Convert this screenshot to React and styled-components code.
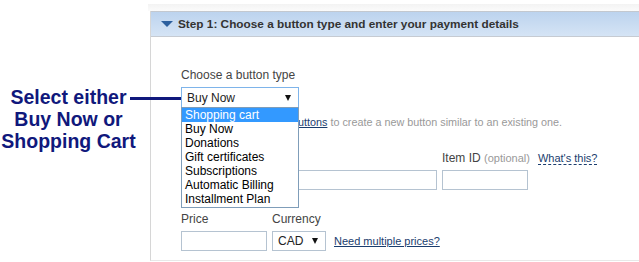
import React from 'react'
import styled, { createGlobalStyle } from 'styled-components'

const GlobalStyle = createGlobalStyle`
  body {
    margin: 0;
    background: #fff;
    font-family: 'Liberation Sans', Arial, sans-serif;
  }
`

const Page = styled.div`
  position: relative;
  display: flex;
  width: 639px;
  height: 262px;
  overflow: hidden;
  background: #fff;
`

const Callout = styled.div`
  width: 150px;
  flex-shrink: 0;
  padding-top: 86px;
  box-sizing: border-box;

  .callout-text {
    width: 137px;
    text-align: center;
    font-size: 19.5px;
    line-height: 22px;
    font-weight: bold;
    color: #10187c;
  }
`

// the pointer line runs over the panel edge to the select box
const Connector = styled.span`
  position: absolute;
  left: 130px;
  top: 97px;
  width: 51px;
  height: 3px;
  background: #10187c;
  z-index: 3;
`

const Panel = styled.section`
  flex: 1;
  display: flex;
  flex-direction: column;
  padding: 4px 0 1px;
`

const Shade = styled.div`
  height: 7px;
  margin-left: -2px;
  background: linear-gradient(#f3f3f3, #fbfbfb);
`

const Box = styled.div`
  flex: 1;
  border-left: 1px solid #d6d6d6;
  border-bottom: 1px solid #e8e8e8;
`

const StepHeader = styled.h2`
  margin: 0;
  height: 24px;
  display: flex;
  align-items: center;
  gap: 5px;
  padding-left: 10px;
  border-top: 1px solid #c3c8cf;
  border-bottom: 1px solid #c6cbd2;
  background: linear-gradient(#bcd3ee, #d5e4f5);
  font-size: 11.8px;
  font-weight: bold;
  color: #333;
`

const Caret = styled.span`
  width: 0;
  height: 0;
  border-left: 6px solid transparent;
  border-right: 6px solid transparent;
  border-top: 6px solid #2b5f9e;
`

const Body = styled.div`
  padding: 31px 0 0 30px;
`

const Label = styled.div`
  height: 15px;
  font-size: 12px;
  line-height: 15px;
  color: #444;
  white-space: nowrap;

  .optional {
    font-size: 11px;
    color: #999;
  }
`

const SelectWrap = styled.div`
  position: relative;
  width: ${({ $width }) => $width}px;
  margin-top: ${({ $top }) => $top || 0}px;
`

const SelectBox = styled.div`
  height: ${({ $height }) => $height}px;
  box-sizing: border-box;
  display: flex;
  align-items: center;
  justify-content: space-between;
  padding: 0 7px 0 5px;
  border: 1px solid ${({ $focus }) => ($focus ? '#7eb4ea' : '#b5c3d1')};
  font-size: 12px;
  color: #222;
`

const Arrow = styled.span`
  width: 0;
  height: 0;
  border-left: 3.5px solid transparent;
  border-right: 3.5px solid transparent;
  border-top: 6px solid #111;
`

const Dropdown = styled.ul`
  position: absolute;
  top: 20px;
  left: 0;
  width: 100%;
  box-sizing: border-box;
  margin: 0;
  padding: 0 0 1px;
  list-style: none;
  border: 1px solid #7f9db9;
  background: #fff;
  z-index: 2;
`

const Option = styled.li`
  height: 14px;
  line-height: 14px;
  padding-left: 3px;
  font-size: 12px;
  color: ${({ $active }) => ($active ? '#fff' : '#000')};
  background: ${({ $active }) => ($active ? '#3399ff' : 'transparent')};
`

const Note = styled.div`
  display: flex;
  margin-top: 7px;
  padding-left: 117px;
  font-size: 10.8px;
  line-height: 14px;
  color: #999;
  white-space: nowrap;
`

const Link = styled.a`
  color: #1a3d6e;
  text-decoration: underline;
  margin-right: ${({ $gap }) => $gap || 0}px;
`

const HelpLink = styled.a`
  margin-left: 8px;
  font-size: 11px;
  color: #1a3d6e;
  border-bottom: 1px dashed #1a3d6e;
`

const FieldRow = styled.div`
  display: flex;
  gap: 5px;
  margin-top: 22px;
`

const Field = styled.div`
  display: flex;
  flex-direction: column;
  gap: 4px;
`

const Input = styled.div`
  width: ${({ $width }) => $width}px;
  height: 20px;
  box-sizing: border-box;
  border: 1px solid #b5c3d1;
  background: #fff;
`

const RowLink = styled.a`
  align-self: flex-end;
  margin-left: 3px;
  height: 20px;
  line-height: 20px;
  font-size: 11px;
  color: #1a3d6e;
  text-decoration: underline;
`

const types = [
  'Shopping cart',
  'Buy Now',
  'Donations',
  'Gift certificates',
  'Subscriptions',
  'Automatic Billing',
  'Installment Plan',
]

export default function App() {
  return (
    <>
      <GlobalStyle />
      <Page>
        <Callout>
          <div className="callout-text">
            Select either
            <br />
            Buy Now or
            <br />
            Shopping Cart
          </div>
        </Callout>
        <Connector />
        <Panel>
          <Shade />
          <Box>
            <StepHeader>
              <Caret />
              Step 1: Choose a button type and enter your payment details
            </StepHeader>
            <Body>
              <Label>Choose a button type</Label>
              <SelectWrap $width={118} $top={4}>
                <SelectBox $height={21} $focus>
                  Buy Now
                  <Arrow />
                </SelectBox>
                <Dropdown>
                  {types.map((t, i) => (
                    <Option key={t} $active={i === 0}>
                      {t}
                    </Option>
                  ))}
                </Dropdown>
              </SelectWrap>
              <Note>
                <Link $gap={3}>uttons</Link>
                to create a new button similar to an existing one.
              </Note>
              <FieldRow>
                <Field>
                  <Label />
                  <Input $width={256} />
                </Field>
                <Field>
                  <Label>
                    Item ID <span className="optional">(optional)</span>
                    <HelpLink>What's this?</HelpLink>
                  </Label>
                  <Input $width={86} />
                </Field>
              </FieldRow>
              <FieldRow>
                <Field>
                  <Label>Price</Label>
                  <Input $width={86} />
                </Field>
                <Field>
                  <Label>Currency</Label>
                  <SelectWrap $width={54}>
                    <SelectBox $height={20}>
                      CAD
                      <Arrow />
                    </SelectBox>
                  </SelectWrap>
                </Field>
                <RowLink>Need multiple prices?</RowLink>
              </FieldRow>
            </Body>
          </Box>
        </Panel>
      </Page>
    </>
  )
}
